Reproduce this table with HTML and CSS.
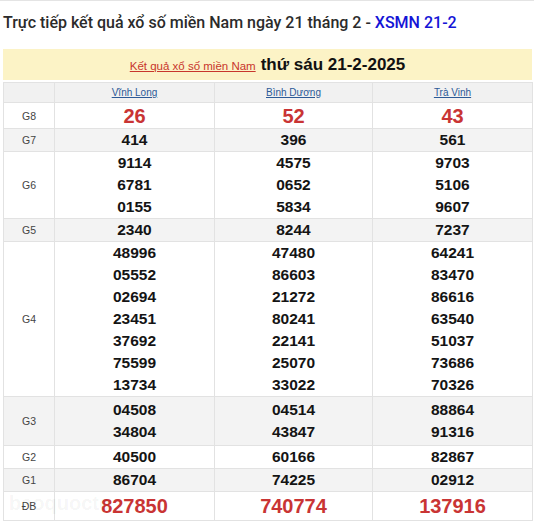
FILE: index.html
```html
<!DOCTYPE html>
<html lang="vi">
<head>
<meta charset="utf-8">
<title>XSMN 21-2</title>
<link rel="stylesheet" href="styles.css">
</head>
<body>
<div class="page">
  <h1 class="title">Trực tiếp kết quả xổ số miền Nam ngày 21 tháng 2 - <a class="title-link" href="#">XSMN 21-2</a></h1>
  <div class="banner"><a class="banner-link" href="#">Kết quả xổ số miền Nam</a> <span class="banner-date">thứ sáu 21-2-2025</span></div>
  <div class="table-wrap">
  <table class="results">
    <colgroup><col class="c-label"><col class="c-prov"><col class="c-prov2"><col class="c-prov"></colgroup>
    <tr class="head"><td></td><td><a href="#">Vĩnh Long</a></td><td><a href="#">Bình Dương</a></td><td><a href="#">Trà Vinh</a></td></tr>
    <tr class="r-g8"><td class="lbl">G8</td><td class="big">26</td><td class="big">52</td><td class="big">43</td></tr>
    <tr class="gray"><td class="lbl">G7</td><td><div>414</div></td><td><div>396</div></td><td><div>561</div></td></tr>
    <tr><td class="lbl">G6</td><td><div>9114</div><div>6781</div><div>0155</div></td><td><div>4575</div><div>0652</div><div>5834</div></td><td><div>9703</div><div>5106</div><div>9607</div></td></tr>
    <tr class="gray"><td class="lbl">G5</td><td><div>2340</div></td><td><div>8244</div></td><td><div>7237</div></td></tr>
    <tr><td class="lbl">G4</td>
      <td><div>48996</div><div>05552</div><div>02694</div><div>23451</div><div>37692</div><div>75599</div><div>13734</div></td>
      <td><div>47480</div><div>86603</div><div>21272</div><div>80241</div><div>22141</div><div>25070</div><div>33022</div></td>
      <td><div>64241</div><div>83470</div><div>86616</div><div>63540</div><div>51037</div><div>73686</div><div>70326</div></td></tr>
    <tr class="gray r-g3"><td class="lbl">G3</td><td><div>04508</div><div>34804</div></td><td><div>04514</div><div>43847</div></td><td><div>88864</div><div>91316</div></td></tr>
    <tr><td class="lbl">G2</td><td><div>40500</div></td><td><div>60166</div></td><td><div>82867</div></td></tr>
    <tr class="gray"><td class="lbl">G1</td><td><div>86704</div></td><td><div>74225</div></td><td><div>02912</div></td></tr>
    <tr class="r-db"><td class="lbl">ĐB</td><td class="big">827850</td><td class="big">740774</td><td class="big">137916</td></tr>
  </table>
  <span class="watermark">baoquocte</span>
  </div>
</div>
</body>
</html>
```

FILE: styles.css
```css
html, body {
  margin: 0;
  padding: 0;
  background: #ffffff;
}
.page {
  border-top: 1px solid #e4e4e4;
  padding: 0 2px 0 3px;
  font-family: "Liberation Sans", Arial, sans-serif;
}
.title {
  margin: 12px 0 0 0;
  font-family: Roboto, "Liberation Sans", sans-serif;
  font-size: 16px;
  font-weight: 500;
  line-height: 20px;
  color: #2b2b2b;
}
.title-link {
  color: #1414d6;
  text-decoration: none;
}
.banner {
  margin-top: 16px;
  height: 31px;
  background: #fcf3c6;
  display: flex;
  align-items: center;
  justify-content: center;
  gap: 5px;
}
.banner-link {
  color: #c8362c;
  font-size: 11.5px;
  text-decoration: underline;
  margin-top: 2px;
}
.banner-date {
  font-size: 17px;
  font-weight: bold;
  color: #111;
}
.table-wrap {
  position: relative;
  margin-top: 2px;
}
.results {
  width: 529px;
  border-collapse: collapse;
  table-layout: fixed;
  border: 1px solid #dcdcdc;
}
.c-label { width: 51px; }
.c-prov { width: 160px; }
.c-prov2 { width: 158px; }
.results td {
  border: 1px solid #e2e2e2;
  padding: 0;
  text-align: center;
  vertical-align: middle;
  font-size: 15.5px;
  font-weight: bold;
  color: #141414;
  line-height: 22px;
}
.results tr.gray td { background: #f3f3f3; }
.results tr.head td {
  background: #f1f1f1;
  height: 19px;
  line-height: 19px;
  font-size: 10px;
  font-weight: normal;
}
.results tr.head a {
  color: #2c5a97;
  text-decoration: underline;
}
.results td.lbl {
  font-size: 10.5px;
  font-weight: normal;
  color: #444;
}
.results td.big {
  font-size: 20px;
  color: #c93434;
}
.r-g8 td { height: 25px; }
.r-db td { height: 28px; }
.r-g3 td { padding: 2px 0; }
.watermark {
  position: absolute;
  left: 6px;
  bottom: 6px;
  font-size: 20px;
  font-weight: bold;
  color: rgba(0, 0, 0, 0.05);
  pointer-events: none;
}
```
